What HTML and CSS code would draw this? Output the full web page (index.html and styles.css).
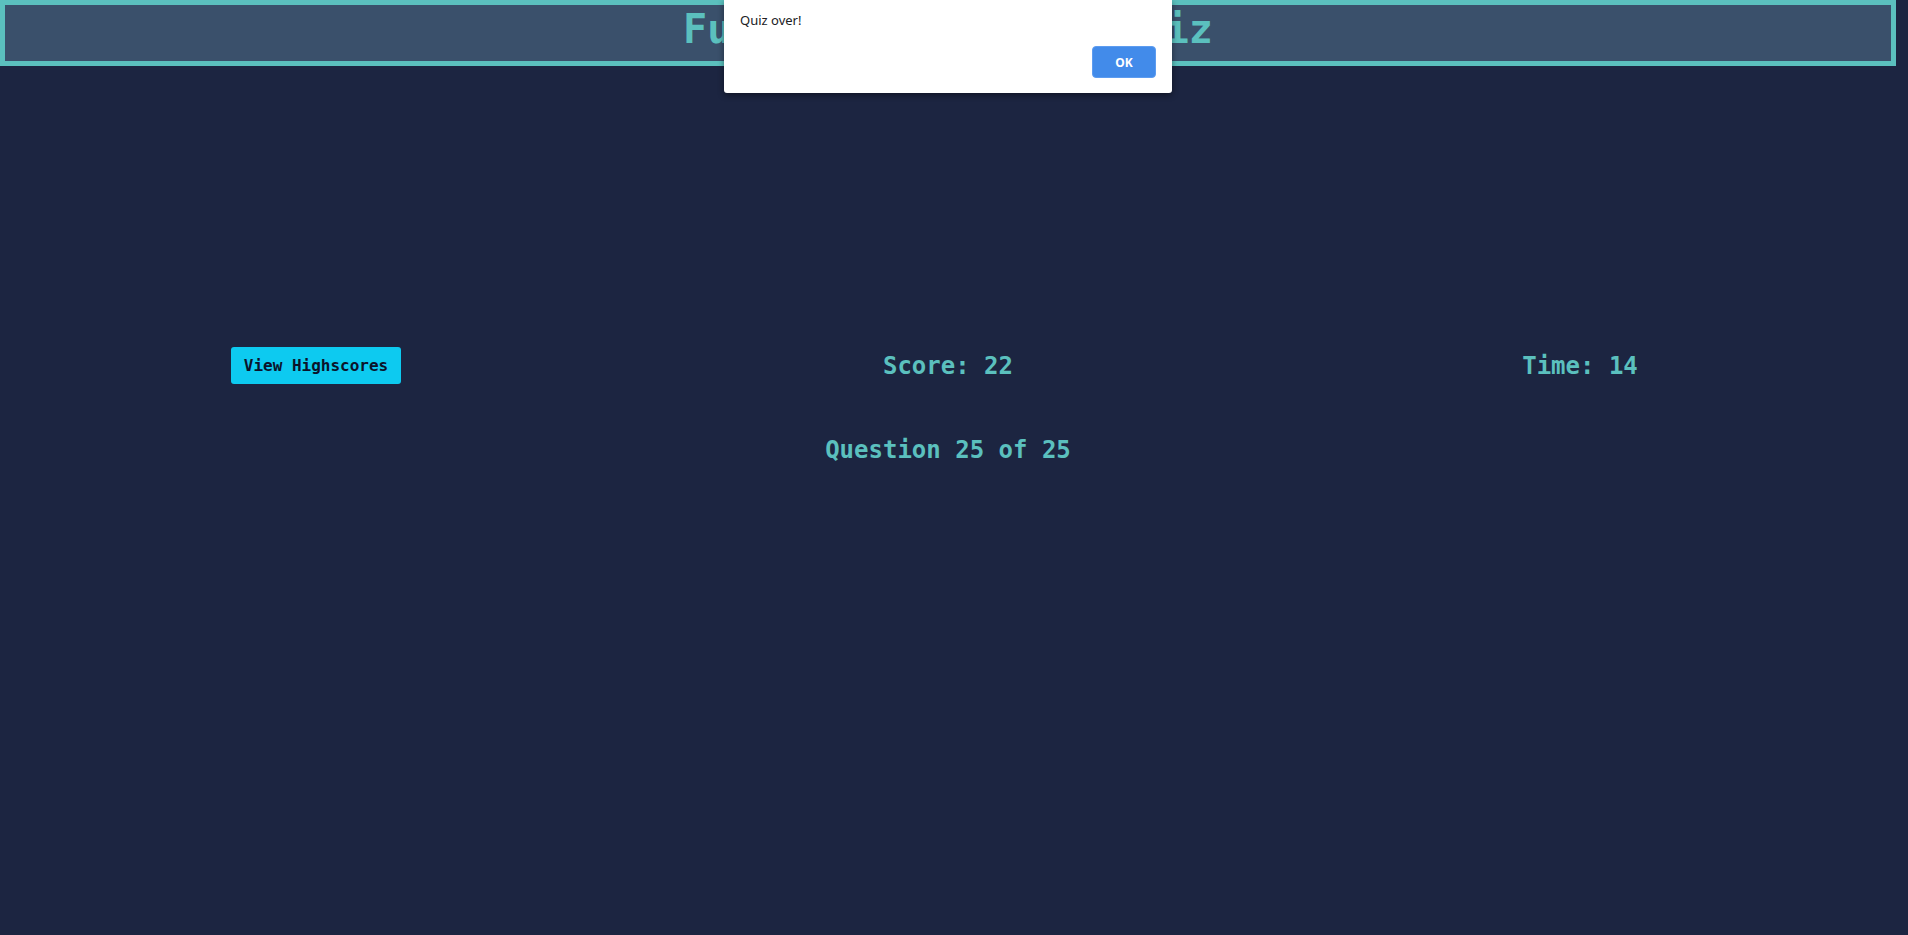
FILE: index.html
```html
<!DOCTYPE html>
<html lang="en">
<head>
<meta charset="utf-8">
<title>Quiz</title>
<link rel="stylesheet" href="styles.css">
</head>
<body>
<div class="page">
  <header class="site-header">
    <h1 class="title">Full Stack Coding Quiz</h1>
  </header>
  <main class="quiz">
    <div class="status-row">
      <div class="cell"><button class="hs-btn" type="button">View Highscores</button></div>
      <div class="cell"><span class="stat">Score: 22</span></div>
      <div class="cell"><span class="stat">Time: 14</span></div>
    </div>
    <h2 class="question-count">Question 25 of 25</h2>
  </main>
</div>
<div class="alert-dialog" role="alertdialog">
  <p class="alert-msg">Quiz over!</p>
  <div class="alert-actions"><button class="alert-ok" type="button">OK</button></div>
</div>
</body>
</html>
```
FILE: styles.css
```css
html, body {
  margin: 0;
  padding: 0;
  background: #1c2541;
  height: 100%;
}
body {
  font-family: "DejaVu Sans Mono", "Liberation Mono", monospace;
  color: #5bc0be;
  overflow: hidden;
}
.page {
  width: 1896px;
}
.site-header {
  background: #3a506b;
  border: 5px solid #5bc0be;
  height: 56px;
  box-sizing: content-box;
}
.title {
  margin: 0;
  padding-top: 1px;
  font-size: 40px;
  line-height: 46px;
  font-weight: bold;
  text-align: center;
  color: #5bc0be;
}
.quiz {
  padding-top: 281px;
}
.status-row {
  display: grid;
  grid-template-columns: 1fr 1fr 1fr;
  align-items: center;
  height: 37px;
}
.cell {
  display: flex;
  justify-content: center;
  align-items: center;
}
.hs-btn {
  font-family: "DejaVu Sans Mono", "Liberation Mono", monospace;
  font-size: 16px;
  font-weight: bold;
  line-height: normal;
  padding: 9px 13px;
  border: none;
  border-radius: 3px;
  background: #0dcaf0;
  color: #0b132b;
  cursor: pointer;
}
.stat {
  font-size: 24px;
  font-weight: bold;
}
.question-count {
  margin: 52px 0 0;
  font-size: 24px;
  line-height: normal;
  font-weight: bold;
  text-align: center;
}
.alert-dialog {
  position: absolute;
  top: 0;
  left: 724px;
  width: 448px;
  height: 93px;
  box-sizing: border-box;
  background: #ffffff;
  border-radius: 0 0 3px 3px;
  box-shadow: 0 2px 6px rgba(0, 0, 0, 0.45);
  padding: 11px 16px 15px 16px;
  font-family: "Noto Sans", "Open Sans", sans-serif;
  display: flex;
  flex-direction: column;
  justify-content: space-between;
}
.alert-msg {
  margin: 0;
  font-size: 13px;
  color: #202124;
}
.alert-actions {
  display: flex;
  justify-content: flex-end;
}
.alert-ok {
  width: 64px;
  height: 32px;
  border: 1px solid #5d9cf0;
  border-radius: 4px;
  background: #428bea;
  color: #ffffff;
  font-family: "Noto Sans", "Open Sans", sans-serif;
  font-size: 12px;
  font-weight: bold;
}
```
